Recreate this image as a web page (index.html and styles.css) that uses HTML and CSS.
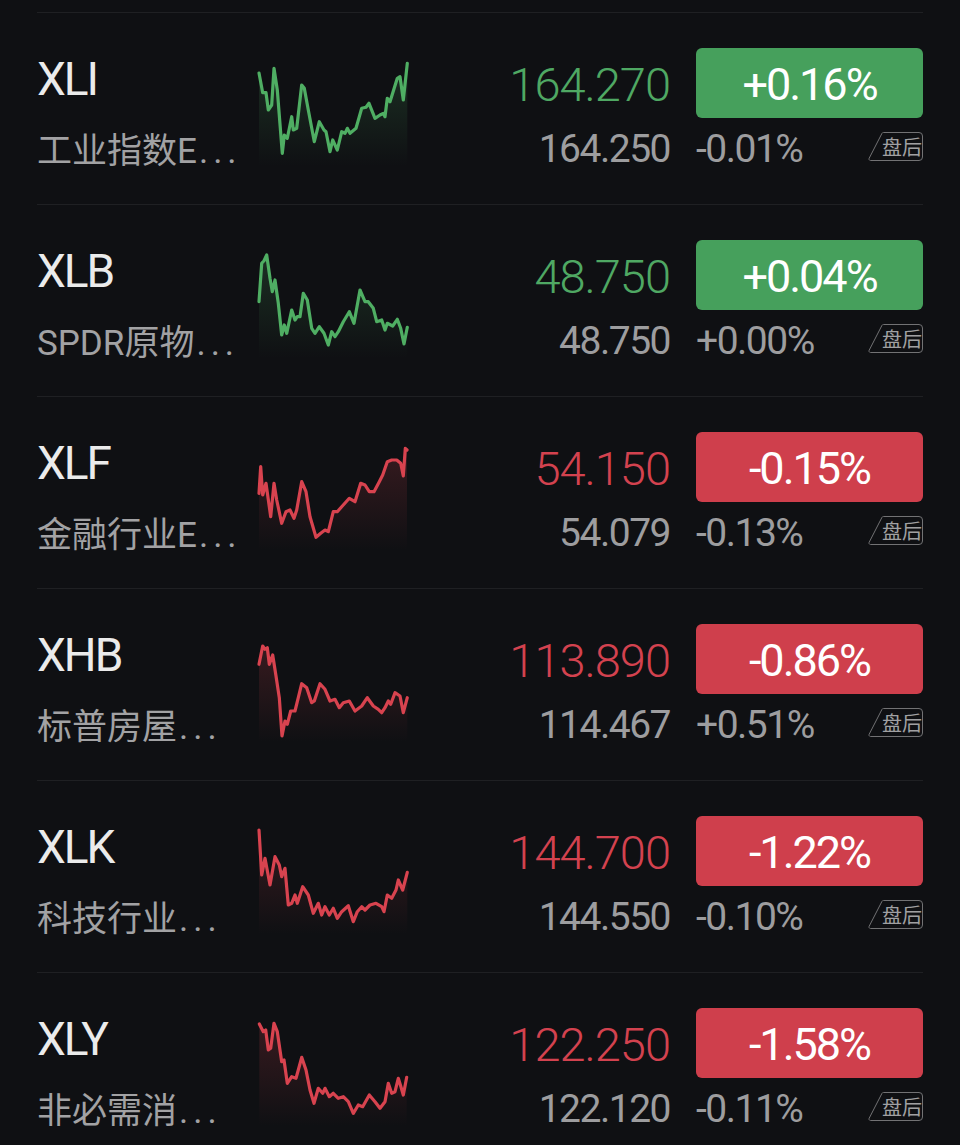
FILE: index.html
```html
<!DOCTYPE html>
<html lang="zh-CN">
<head>
<meta charset="UTF-8">
<meta name="viewport" content="width=device-width, initial-scale=1.0">
<title>自选 - ETF</title>
<link rel="stylesheet" href="styles.css">
</head>
<body>

<svg class="defs" width="0" height="0">
  <defs>
    <linearGradient id="fadeUp" x1="0" y1="0" x2="0" y2="1">
      <stop offset="0" stop-color="#4fae63" stop-opacity="0.2"/>
      <stop offset="1" stop-color="#4fae63" stop-opacity="0"/>
    </linearGradient>
    <linearGradient id="fadeDown" x1="0" y1="0" x2="0" y2="1">
      <stop offset="0" stop-color="#d8434f" stop-opacity="0.2"/>
      <stop offset="1" stop-color="#d8434f" stop-opacity="0"/>
    </linearGradient>
  </defs>
</svg>

<div class="list">

  <div class="item up">
    <div class="sym">XLI</div>
    <svg class="spark" viewBox="0 0 150 110"><path class="area"/><path class="line" d="M1 15 L4.7 34.7 L8 34.7 L10.3 52 L13.7 47 L16 10.3 L19.3 32 L24.3 95.3 L26.3 77 L29.3 80.3 L33.7 58.7 L35.3 72 L38.7 70.3 L43.7 27 L46.3 30.3 L50.3 52 L56.3 83.7 L61.3 63.7 L66 72 L68 73.7 L72 93.7 L74.7 82 L79.3 92 L83.7 73.7 L87 75.3 L89.3 70.3 L92 75.3 L98 70.3 L103.7 50.3 L108 49.3 L111 45.3 L117 60.3 L122 57 L125.3 55.3 L127 58.7 L129.3 40.3 L132 43.7 L139.3 20.3 L142 18.7 L145.3 42 L149.3 5.3"/></svg>
    <div class="price">164.270</div>
    <div class="chg">+0.16%</div>
    <div class="name">工业指数E<span class="more">...</span></div>
    <div class="last">164.250</div>
    <div class="after">-0.01%<span class="tag"><svg viewBox="0 0 55 29"><path d="M15.5 .5H51a3.5 3.5 0 0 1 3.5 3.5v21a3.5 3.5 0 0 1-3.5 3.5H2.5a1.5 1.5 0 0 1-1.3-2.3L14 1.3a1.7 1.7 0 0 1 1.5-.8z"/></svg>盘后</span></div>
  </div>

  <div class="item up">
    <div class="sym">XLB</div>
    <svg class="spark" viewBox="0 0 150 110"><path class="area"/><path class="line" d="M1 51.7 L3.7 13.3 L6 10.7 L8.7 5 L12 28.3 L14.3 41.7 L17 30 L20.3 53.3 L23.7 85 L26.3 75 L28.7 83.3 L33.7 60 L37 70 L39.3 66.7 L42 66.7 L45.3 43.3 L49.3 50 L53.7 78.3 L57 83.3 L61.3 76.7 L66 83.3 L70.3 95 L73.7 81.7 L77 86.7 L80.3 81.7 L85.3 71.7 L91.3 61.7 L96 73.3 L102 40 L107 51.7 L110.3 51.7 L115.3 58.3 L118.7 71.7 L123.7 70 L127 80 L129.3 73.3 L134.7 76 L139.3 69.3 L142.7 78.3 L146 94 L149.3 77.3"/></svg>
    <div class="price">48.750</div>
    <div class="chg">+0.04%</div>
    <div class="name">SPDR原物<span class="more">...</span></div>
    <div class="last">48.750</div>
    <div class="after">+0.00%<span class="tag"><svg viewBox="0 0 55 29"><path d="M15.5 .5H51a3.5 3.5 0 0 1 3.5 3.5v21a3.5 3.5 0 0 1-3.5 3.5H2.5a1.5 1.5 0 0 1-1.3-2.3L14 1.3a1.7 1.7 0 0 1 1.5-.8z"/></svg>盘后</span></div>
  </div>

  <div class="item down">
    <div class="sym">XLF</div>
    <svg class="spark" viewBox="0 0 150 110"><path class="area"/><path class="line" d="M1 51.3 L2.7 24.7 L4.7 53 L8 41.3 L12.7 74.7 L16 41.3 L18.7 58 L23.7 81.3 L28 69.7 L32 68 L36 76.3 L38.7 68 L43.7 39.7 L48 49.7 L52 74.7 L58 95.3 L62.7 91.3 L67 88 L70.3 89.7 L75.3 69.7 L79.3 69.7 L83.7 64.7 L91.3 56.3 L97 59.7 L102.7 41.3 L107 43 L111.3 49.7 L116 49.7 L121.3 39.7 L124.7 33 L129.3 19.7 L133.7 18 L138.7 18 L142.7 21.3 L145.3 34 L147.3 6.3 L149 8"/></svg>
    <div class="price">54.150</div>
    <div class="chg">-0.15%</div>
    <div class="name">金融行业E<span class="more">...</span></div>
    <div class="last">54.079</div>
    <div class="after">-0.13%<span class="tag"><svg viewBox="0 0 55 29"><path d="M15.5 .5H51a3.5 3.5 0 0 1 3.5 3.5v21a3.5 3.5 0 0 1-3.5 3.5H2.5a1.5 1.5 0 0 1-1.3-2.3L14 1.3a1.7 1.7 0 0 1 1.5-.8z"/></svg>盘后</span></div>
  </div>

  <div class="item down">
    <div class="sym">XHB</div>
    <svg class="spark" viewBox="0 0 150 110"><path class="area"/><path class="line" d="M1 30.3 L4.7 12 L7 15.3 L9.3 13.7 L11.3 30.3 L14.7 21 L18 42 L21.3 63.7 L24 102 L27 87 L29.3 90.3 L32.7 77 L37 77 L40.3 63.7 L43.7 49.7 L48.7 53.7 L53.7 68.7 L56.3 67 L62 49.7 L67 55.3 L72 67 L77 65.3 L81.3 73.7 L85.3 68.7 L91.3 67 L97 77 L103.7 72 L109.3 63.7 L115.3 72 L120.3 75.3 L123.7 78.7 L127 73.7 L130.3 67 L132.7 70.3 L137 58.7 L142 62 L145.3 78.7 L149.3 63.7"/></svg>
    <div class="price">113.890</div>
    <div class="chg">-0.86%</div>
    <div class="name">标普房屋<span class="more">...</span></div>
    <div class="last">114.467</div>
    <div class="after">+0.51%<span class="tag"><svg viewBox="0 0 55 29"><path d="M15.5 .5H51a3.5 3.5 0 0 1 3.5 3.5v21a3.5 3.5 0 0 1-3.5 3.5H2.5a1.5 1.5 0 0 1-1.3-2.3L14 1.3a1.7 1.7 0 0 1 1.5-.8z"/></svg>盘后</span></div>
  </div>

  <div class="item down">
    <div class="sym">XLK</div>
    <svg class="spark" viewBox="0 0 150 110"><path class="area"/><path class="line" d="M1 4 L3.7 49 L7 32.3 L12 59 L17 30.7 L21.3 39 L23.7 50.7 L27 42.3 L30.3 79 L33.7 77.3 L37 69 L39.3 77.3 L44.7 60.7 L50.3 69 L55.3 87.3 L60.3 77.3 L63.7 89 L67 80.7 L71.3 89 L75.3 82.3 L79.3 92.3 L83.7 85.7 L90.3 79.7 L95.3 95.7 L99.3 85.7 L103.7 80.7 L107 84 L112 79 L118 77.3 L123.7 80.7 L126 85.7 L129.3 69 L133.7 72.3 L138 64 L140.3 54 L144.7 64 L149.3 46.3"/></svg>
    <div class="price">144.700</div>
    <div class="chg">-1.22%</div>
    <div class="name">科技行业<span class="more">...</span></div>
    <div class="last">144.550</div>
    <div class="after">-0.10%<span class="tag"><svg viewBox="0 0 55 29"><path d="M15.5 .5H51a3.5 3.5 0 0 1 3.5 3.5v21a3.5 3.5 0 0 1-3.5 3.5H2.5a1.5 1.5 0 0 1-1.3-2.3L14 1.3a1.7 1.7 0 0 1 1.5-.8z"/></svg>盘后</span></div>
  </div>

  <div class="item down">
    <div class="sym">XLY</div>
    <svg class="spark" viewBox="0 0 150 110"><path class="area"/><path class="line" d="M1.3 6 L5.3 13.7 L7.7 12 L10.3 32 L12.7 30.3 L16 5.3 L19.3 13.7 L23.7 43.7 L26 42 L29.3 65.3 L33.7 58.7 L38 60.3 L40.3 52 L43.7 39.3 L48 52 L52 72 L56 85.3 L60.3 70.3 L64.7 75.3 L67 70.3 L71.3 78.7 L75.3 75.3 L80.3 80.3 L85.3 78.7 L90.3 83.7 L95.3 95.3 L100.3 87 L104.7 88.7 L111.3 77 L117 83.7 L122 90.3 L127 83.7 L130.3 65.3 L133.7 75.3 L137 73.7 L140.3 60.3 L142.7 68 L145.3 77 L148.7 59.3"/></svg>
    <div class="price">122.250</div>
    <div class="chg">-1.58%</div>
    <div class="name">非必需消<span class="more">...</span></div>
    <div class="last">122.120</div>
    <div class="after">-0.11%<span class="tag"><svg viewBox="0 0 55 29"><path d="M15.5 .5H51a3.5 3.5 0 0 1 3.5 3.5v21a3.5 3.5 0 0 1-3.5 3.5H2.5a1.5 1.5 0 0 1-1.3-2.3L14 1.3a1.7 1.7 0 0 1 1.5-.8z"/></svg>盘后</span></div>
  </div>

</div>

<script>
  // 走势图下方的渐变区域，由折线闭合到底部
  document.querySelectorAll('.spark').forEach(function(svg) {
    var line = svg.querySelector('.line');
    var d = line.getAttribute('d');
    var nums = d.match(/[\d.]+/g);
    var firstX = nums[0];
    var lastX = nums[nums.length - 2];
    svg.querySelector('.area').setAttribute('d', d + ' L' + lastX + ' 108 L' + firstX + ' 108 Z');
  });
</script>
</body>
</html>
```

FILE: styles.css
```css
body {
  margin: 0;
  background-color: #0f1013;
  font-family: Roboto, "Noto Sans CJK SC", sans-serif;
  color: #e9e9e9;
}

.defs {
  position: absolute;
  width: 0;
  height: 0;
}

.list {
  padding: 12px 37px 0;
}

.item {
  display: grid;
  grid-template-columns: 221px 150px 1fr 227px;
  grid-template-rows: 70px 42px;
  row-gap: 10px;
  height: 192px;
  box-sizing: border-box;
  padding-top: 35px;
  border-top: 1px solid #1f2023;
}

.sym {
  align-self: start;
  margin-top: 8px;
  font-size: 46px;
  line-height: 46px;
  letter-spacing: -2px;
  color: #ebebeb;
}

.spark {
  grid-column: 2;
  grid-row: 1 / 3;
  width: 150px;
  height: 110px;
  margin-top: 10px;
  overflow: visible;
}
.spark .line {
  fill: none;
  stroke-width: 3.2;
  stroke-linejoin: round;
  stroke-linecap: round;
}
.up .spark .line { stroke: #4fae63; }
.up .spark .area { fill: url(#fadeUp); }
.down .spark .line { stroke: #d8434f; }
.down .spark .area { fill: url(#fadeDown); }

.price {
  grid-column: 3;
  grid-row: 1;
  padding-right: 26px;
  text-align: right;
  font-size: 47px;
  font-weight: 300;
  line-height: 74px;
  letter-spacing: -1px;
}
.up .price { color: #4fa863; }
.down .price { color: #d3424f; }

.chg {
  grid-column: 4;
  grid-row: 1;
  height: 70px;
  box-sizing: border-box;
  padding-top: 3px;
  border-radius: 6px;
  text-align: center;
  font-size: 45px;
  line-height: 67px;
  letter-spacing: -2px;
  color: #fff;
}
.up .chg { background-color: #46a05c; }
.down .chg { background-color: #cf3f4c; }

.name {
  grid-column: 1;
  grid-row: 2;
  align-self: start;
  font-size: 35px;
  line-height: 48px;
  color: #a2a2a4;
  white-space: nowrap;
}
.name .more {
  margin-left: 2px;
  letter-spacing: 5px;
}

.last {
  grid-column: 3;
  grid-row: 2;
  padding-right: 26px;
  text-align: right;
  font-size: 39px;
  line-height: 43px;
  letter-spacing: -1.5px;
  color: #9d9d9f;
}

.after {
  grid-column: 4;
  grid-row: 2;
  display: flex;
  justify-content: space-between;
  align-items: flex-start;
  font-size: 39px;
  line-height: 43px;
  letter-spacing: -1.5px;
  color: #9d9d9f;
}

.tag {
  position: relative;
  margin-top: 4px;
  width: 55px;
  height: 29px;
  box-sizing: border-box;
  padding-left: 14px;
  font-family: "Noto Sans CJK SC", sans-serif;
  font-size: 20px;
  line-height: 29px;
  letter-spacing: 0;
  color: #a0a0a2;
}
.tag svg {
  position: absolute;
  left: 0;
  top: 0;
  width: 55px;
  height: 29px;
}
.tag svg path {
  fill: none;
  stroke: #727274;
  stroke-width: 1;
}
```
